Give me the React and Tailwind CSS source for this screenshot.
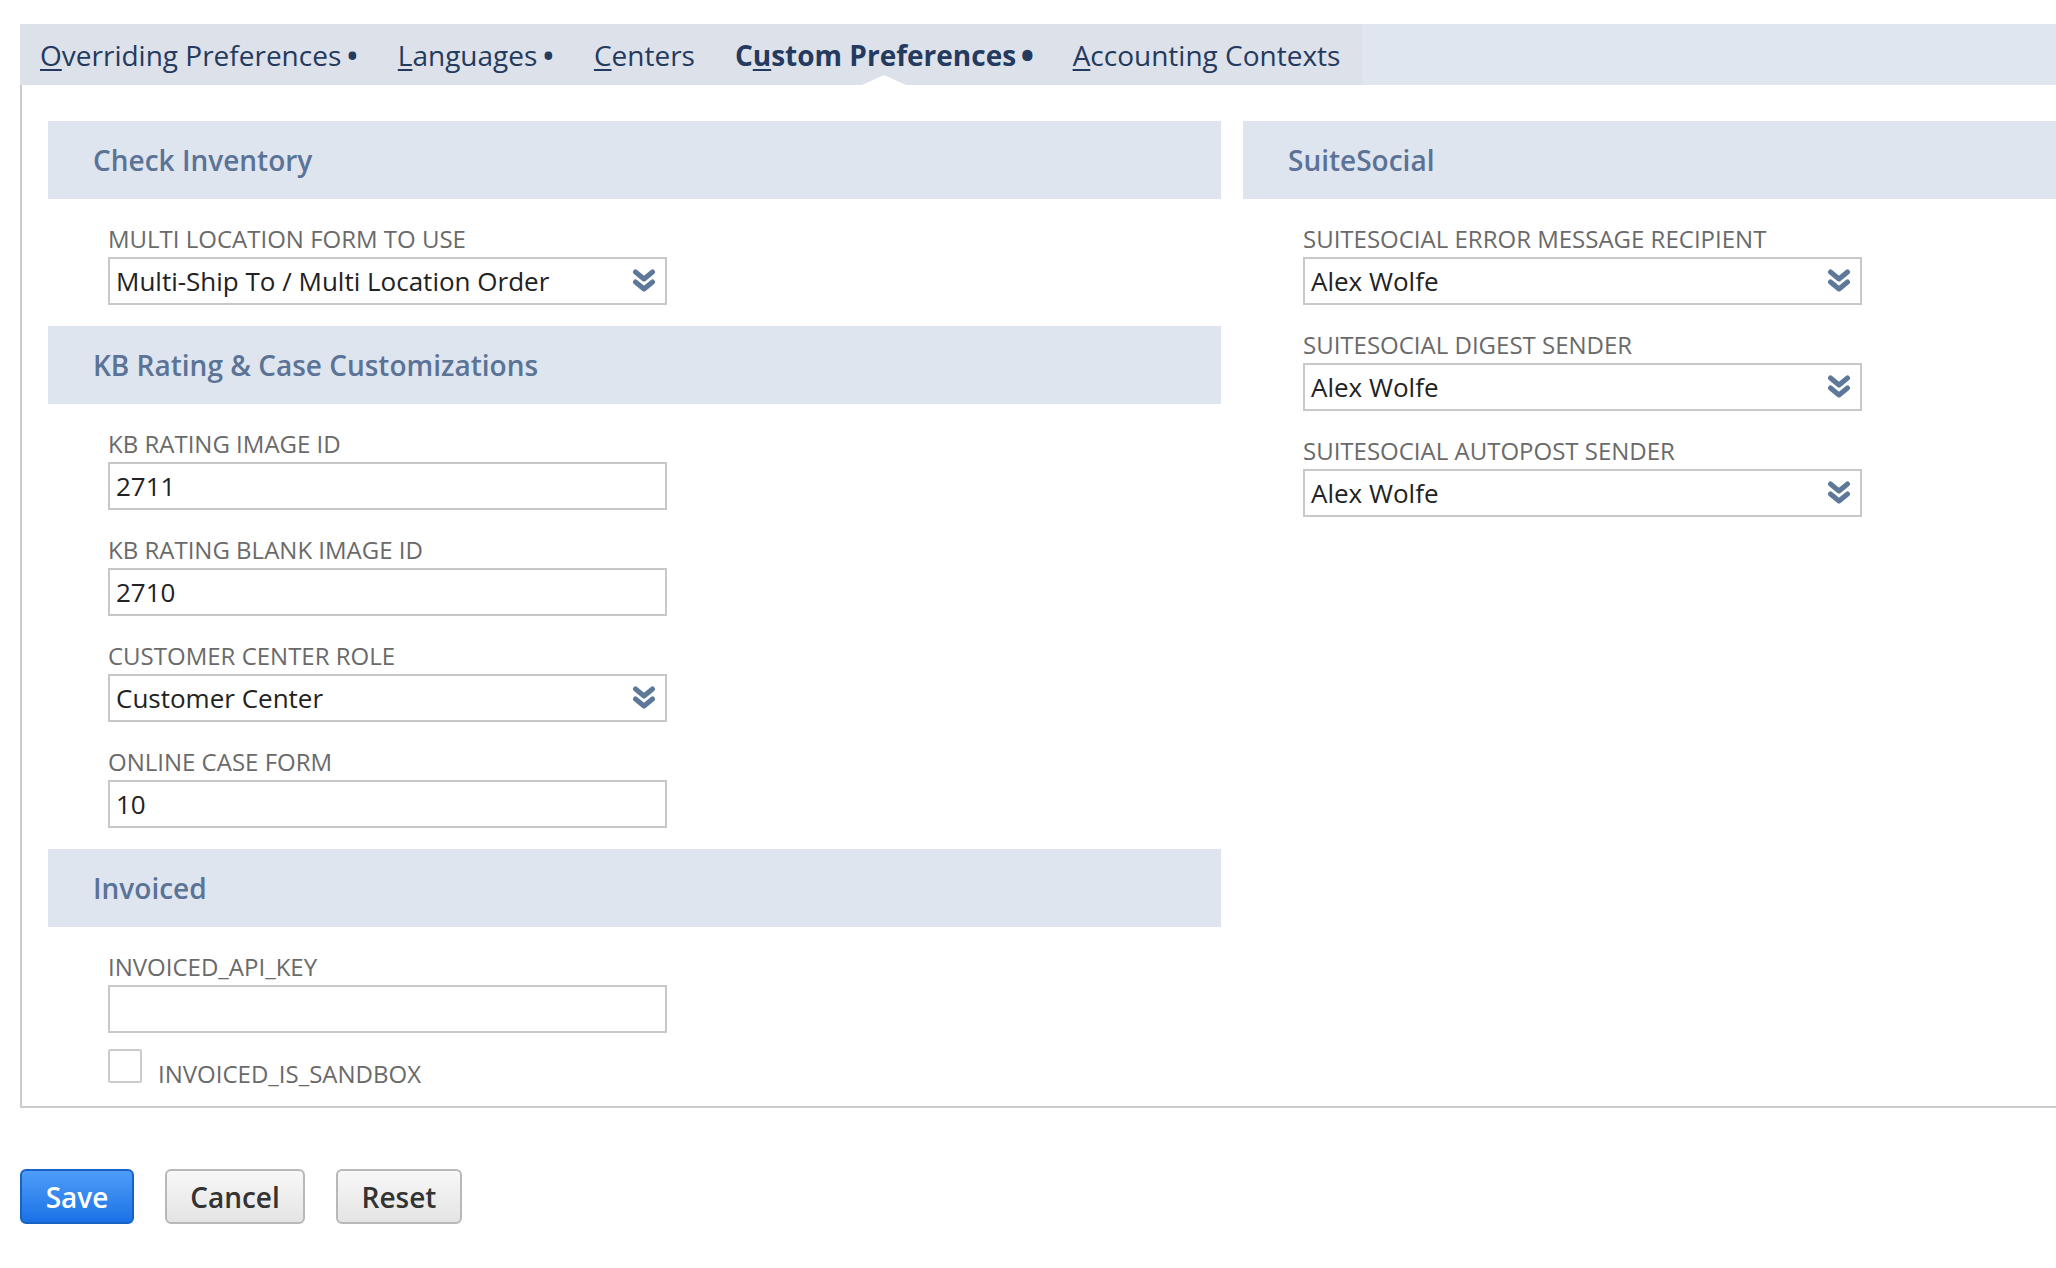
import React from "react";

const Chevrons = () => (
  <svg width="24" height="26" viewBox="0 0 24 26" className="text-[#5d7899]">
    <polyline points="3.5,4 12,11 20.5,4" fill="none" stroke="currentColor" strokeWidth="5" strokeLinecap="round" strokeLinejoin="round" />
    <polyline points="3.5,14 12,21 20.5,14" fill="none" stroke="currentColor" strokeWidth="5" strokeLinecap="round" strokeLinejoin="round" />
  </svg>
);

const Field = ({ label, value, select }) => (
  <div className="mt-[26px]">
    <div className="text-[24px] leading-[28px] mb-[4px] text-[#6a6a6a]">{label}</div>
    <div className="w-[559px] h-[48px] border-2 border-[#c8c8c8] bg-white flex items-center justify-between pl-[6px] pr-[9px] text-[26px] text-[#222222]">
      <span>{value}</span>
      {select && <Chevrons />}
    </div>
  </div>
);

const Header = ({ children }) => (
  <div className="h-[78px] flex items-center pl-[45px] bg-[#dfe5ee] text-[28px] font-semibold text-[#5a7396]">
    {children}
  </div>
);

const tabs = [
  { pre: "", key: "O", post: "verriding Preferences", dot: true },
  { pre: "", key: "L", post: "anguages", dot: true },
  { pre: "", key: "C", post: "enters", dot: false },
  { pre: "C", key: "u", post: "stom Preferences", dot: true, active: true },
  { pre: "", key: "A", post: "ccounting Contexts", dot: false },
];

export default function App() {
  return (
    <div className="min-h-screen bg-white overflow-hidden pt-[24px] pl-[20px] font-['Open_Sans','Liberation_Sans',sans-serif]">
      {/* tab bar */}
      <div className="flex h-[61px]">
        <div className="flex bg-[#dde1e9] pr-[2px]">
          {tabs.map((t) => (
            <div
              key={t.post}
              className={
                "relative h-full flex items-center px-[20px] text-[28px] text-[#243a5e] " +
                (t.active ? "font-bold" : "")
              }
            >
              <span>
                {t.pre}
                <span className="underline underline-offset-[3px] decoration-[2px]">{t.key}</span>
                {t.post}
                {t.dot && <span className="ml-[6px] inline-block scale-[1.3]">•</span>}
              </span>
              {t.active && (
                <span className="absolute bottom-0 left-1/2 -translate-x-1/2 w-0 h-0 border-l-[22px] border-r-[22px] border-b-[10px] border-l-transparent border-r-transparent border-b-white" />
              )}
            </div>
          ))}
        </div>
        <div className="flex-1 bg-[#e0e6ef]" />
      </div>

      {/* panel */}
      <div className="border-l-2 border-b-2 border-[#cccccc] pt-[36px] pl-[26px] flex gap-[22px]">
        <div className="w-[1173px] pb-[23px]">
          <Header>Check Inventory</Header>
          <div className="pl-[60px] pb-[21px]">
            <Field label="MULTI LOCATION FORM TO USE" value="Multi-Ship To / Multi Location Order" select />
          </div>

          <Header>KB Rating &amp; Case Customizations</Header>
          <div className="pl-[60px] pb-[21px]">
            <Field label="KB RATING IMAGE ID" value="2711" />
            <Field label="KB RATING BLANK IMAGE ID" value="2710" />
            <Field label="CUSTOMER CENTER ROLE" value="Customer Center" select />
            <Field label="ONLINE CASE FORM" value="10" />
          </div>

          <Header>Invoiced</Header>
          <div className="pl-[60px]">
            <Field label="INVOICED_API_KEY" value="" />
            <div className="mt-[16px] flex items-end">
              <div className="w-[34px] h-[34px] border-2 border-[#cccccc] rounded-[2px] bg-white" />
              <span className="ml-[16px] mb-[-3px] text-[24px] leading-none text-[#6a6a6a]">INVOICED_IS_SANDBOX</span>
            </div>
          </div>
        </div>

        <div className="flex-1">
          <Header>SuiteSocial</Header>
          <div className="pl-[60px]">
            <Field label="SUITESOCIAL ERROR MESSAGE RECIPIENT" value="Alex Wolfe" select />
            <Field label="SUITESOCIAL DIGEST SENDER" value="Alex Wolfe" select />
            <Field label="SUITESOCIAL AUTOPOST SENDER" value="Alex Wolfe" select />
          </div>
        </div>
      </div>

      {/* buttons */}
      <div className="mt-[61px] flex gap-[31px]">
        <button className="w-[114px] h-[55px] rounded-[6px] border-2 border-[#1862c6] bg-linear-to-b from-[#4d9df8] to-[#1a72e6] text-white text-[28px] font-semibold">
          Save
        </button>
        <button className="w-[140px] h-[55px] rounded-[6px] border-2 border-[#b8b8b8] bg-linear-to-b from-[#f8f8f8] to-[#e4e4e4] text-[#333333] text-[28px] font-semibold">
          Cancel
        </button>
        <button className="w-[126px] h-[55px] rounded-[6px] border-2 border-[#b8b8b8] bg-linear-to-b from-[#f8f8f8] to-[#e4e4e4] text-[#333333] text-[28px] font-semibold">
          Reset
        </button>
      </div>
    </div>
  );
}
